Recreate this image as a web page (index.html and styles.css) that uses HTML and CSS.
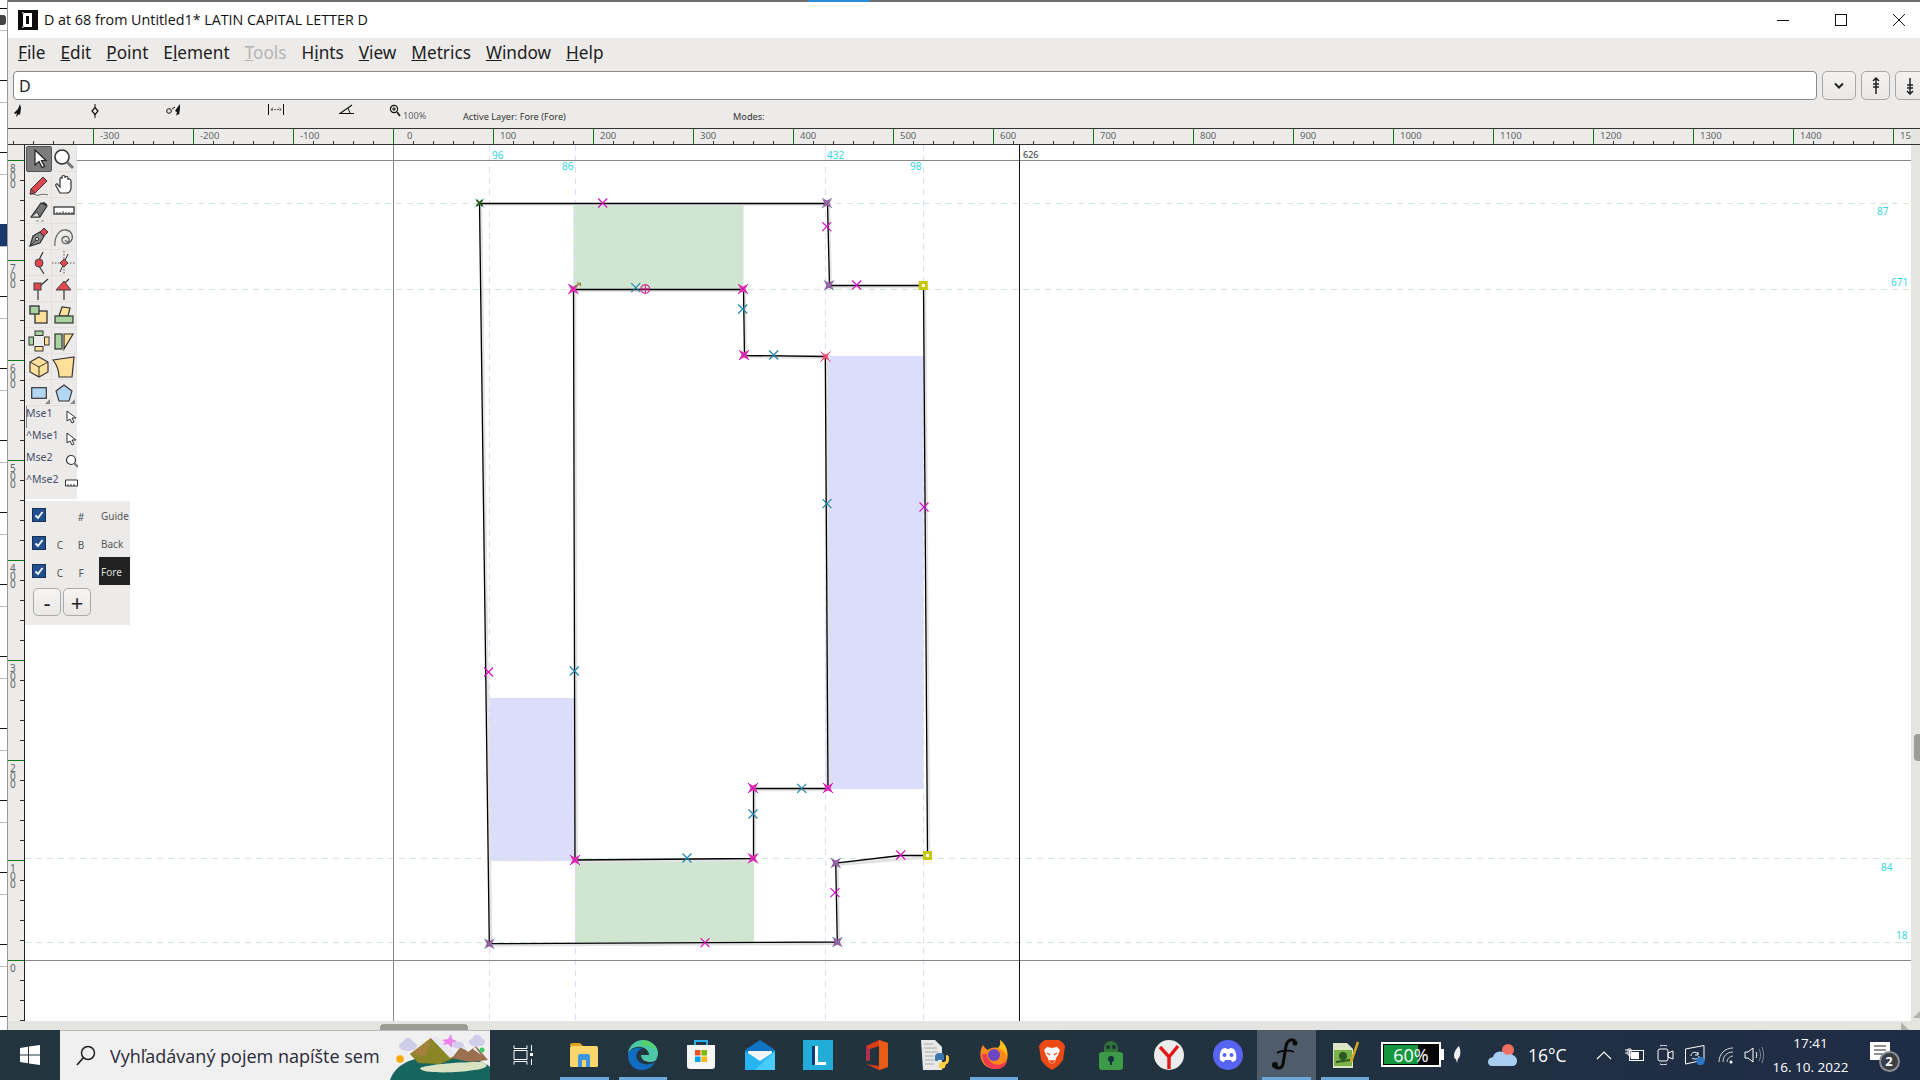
FILE: index.html
```html
<!DOCTYPE html>
<html lang="en">
<head>
  <meta charset="UTF-8" />
  <title>D at 68 from Untitled1* LATIN CAPITAL LETTER D</title>
  <link rel="stylesheet" href="styles.css">
</head>

<body>
  <div class="desktop">
    <div class="desk-edge">
      <div class="desk-icon"></div>
      <div class="desk-navy"></div>
    </div>

    <div class="window">
      <div class="top-accent"></div>
      <!-- title bar -->
      <div class="titlebar">
        <svg class="app-icon" width="20" height="20" viewBox="0 0 20 20">
          <rect width="20" height="20" fill="#0c0c0c"/>
          <path d="M5 3h9v14H5z" fill="#fff"/>
          <path d="M8 6h3v8H8z" fill="#0c0c0c"/>
          <path d="M4 2h2v2H4zM4 16h2v2H4z" fill="#888"/>
        </svg>
        <span class="title-text">D at 68 from Untitled1* LATIN CAPITAL LETTER D</span>
        <div class="win-controls">
          <svg width="14" height="14" viewBox="0 0 14 14"><path d="M1 7.500h12" stroke="#111" fill="none"/></svg>
          <svg width="14" height="14" viewBox="0 0 14 14"><rect x="1.500" y="1.500" width="11" height="11" stroke="#111" fill="none"/></svg>
          <svg width="14" height="14" viewBox="0 0 14 14"><path d="M1 1l12 12M13 1L1 13" stroke="#111" fill="none"/></svg>
        </div>
      </div>

      <!-- menu -->
      <div class="menubar">
        <span><u>F</u>ile</span>
        <span><u>E</u>dit</span>
        <span><u>P</u>oint</span>
        <span>E<u>l</u>ement</span>
        <span class="disabled"><u>T</u>ools</span>
        <span>H<u>i</u>nts</span>
        <span><u>V</u>iew</span>
        <span><u>M</u>etrics</span>
        <span><u>W</u>indow</span>
        <span><u>H</u>elp</span>
      </div>

      <!-- glyph entry -->
      <div class="entry-row">
        <div class="entry">D</div>
        <button class="entry-btn wide">
          <svg width="12" height="8" viewBox="0 0 12 8"><path d="M2 1.500l4 4 4-4" stroke="#222" stroke-width="2" fill="none"/></svg>
        </button>
        <button class="entry-btn">
          <svg width="10" height="18" viewBox="0 0 10 18"><path d="M5 1v16M2 7h6M2 10h6M2 4l3-3 3 3" stroke="#222" stroke-width="1.500" fill="none"/></svg>
        </button>
        <button class="entry-btn">
          <svg width="10" height="18" viewBox="0 0 10 18"><path d="M5 1v16M2 8h6M2 11h6M2 14l3 3 3-3" stroke="#222" stroke-width="1.500" fill="none"/></svg>
        </button>
      </div>

      <!-- info row -->
      <div class="inforow">
        <div class="info-cell w78">
          <svg width="10" height="13" viewBox="0 0 10 13"><path d="M7 0L5 5 1 9l1 1 2-1-1 4 3-3 1 1 1-7z" fill="#111"/></svg>
        </div>
        <div class="info-cell w75">
          <svg width="8" height="14" viewBox="0 0 8 14"><path d="M4 0v3M4 10v4" stroke="#111"/><path d="M4 3.500L7 7l-3 3.500L1 7z" fill="none" stroke="#111" stroke-width="1.200"/></svg>
        </div>
        <div class="info-cell w102">
          <svg width="16" height="13" viewBox="0 0 16 13"><circle cx="3" cy="7" r="2.300" fill="none" stroke="#111"/><path d="M6 5l3-2" stroke="#111"/><path d="M14 0l-3 4-2 3 2 1-1 4 2-2 1 1 1-7z" fill="#111"/></svg>
        </div>
        <div class="info-cell w71">
          <svg width="16" height="11" viewBox="0 0 16 11"><path d="M.5 0v11M15.500 0v11" stroke="#111"/><path d="M3 5.500h10M5 3.500l-2 2 2 2M11 3.500l2 2-2 2" stroke="#333" stroke-width=".8" fill="none" stroke-dasharray="2 1"/></svg>
        </div>
        <div class="info-cell w50">
          <svg width="16" height="10" viewBox="0 0 16 10"><path d="M0 9.500h15M1 9.500L13 1" stroke="#111" fill="none" stroke-width="1.100"/><path d="M9 4l2 5" stroke="#111" fill="none"/></svg>
        </div>
        <div class="info-cell w74">
          <svg width="12" height="13" viewBox="0 0 12 13"><circle cx="5" cy="5" r="3.600" fill="none" stroke="#111" stroke-width="1.200"/><path d="M3 5h4M5 3v4" stroke="#111"/><path d="M8 8l3 4" stroke="#111" stroke-width="1.500"/></svg>
          <span class="zoom-text">100%</span>
        </div>
        <div class="info-cell w270 info-text">Active Layer: Fore (Fore)</div>
        <div class="info-cell info-text">Modes:</div>
      </div>

      <!-- top ruler -->
      <div class="hruler">
        <div class="hr-start"></div>
        <div class="hr-cell">-300</div>
        <div class="hr-cell">-200</div>
        <div class="hr-cell">-100</div>
        <div class="hr-cell zero">0</div>
        <div class="hr-cell">100</div>
        <div class="hr-cell">200</div>
        <div class="hr-cell">300</div>
        <div class="hr-cell">400</div>
        <div class="hr-cell">500</div>
        <div class="hr-cell">600</div>
        <div class="hr-cell">700</div>
        <div class="hr-cell">800</div>
        <div class="hr-cell">900</div>
        <div class="hr-cell">1000</div>
        <div class="hr-cell">1100</div>
        <div class="hr-cell">1200</div>
        <div class="hr-cell">1300</div>
        <div class="hr-cell">1400</div>
        <div class="hr-cell last">1500</div>
        <div class="hr-corner"></div>
      </div>

      <div class="work">
        <!-- left ruler -->
        <div class="vruler">
          <div class="vr-start"></div>
          <div class="vr-cell"><span>800</span></div>
          <div class="vr-cell"><span>700</span></div>
          <div class="vr-cell"><span>600</span></div>
          <div class="vr-cell"><span>500</span></div>
          <div class="vr-cell"><span>400</span></div>
          <div class="vr-cell"><span>300</span></div>
          <div class="vr-cell"><span>200</span></div>
          <div class="vr-cell"><span>100</span></div>
          <div class="vr-cell"><span>0</span></div>
        </div>

        <div class="canvas-wrap">
          <!-- glyph canvas, coordinates are screen pixels -->
          <svg class="canvas" width="1886" height="876" viewBox="25 145 1886 876">
            <defs>
              <g id="offM"><path d="M-4.500-4.500l9 9M4.500-4.500l-9 9" stroke="#d810c0" stroke-width="1.200" fill="none"/></g>
              <g id="offT"><path d="M-4.500-4.500l9 9M4.500-4.500l-9 9" stroke="#1c86a8" stroke-width="1.200" fill="none"/></g>
              <g id="ptM">
                <path d="M-5-5L0-2.500 5-5 2.500 0 5 5 0 2.500-5 5-2.500 0z" fill="#dc3cb0"/>
                <path d="M-5-5l10 10M5-5L-5 5" stroke="#d810c0" fill="none"/>
              </g>
              <g id="ptP">
                <path d="M-5-5L0-2.500 5-5 2.500 0 5 5 0 2.500-5 5-2.500 0z" fill="#a84c98"/>
                <path d="M-5-5l10 10M5-5L-5 5" stroke="#4a9cb8" fill="none" stroke-width=".8"/>
              </g>
              <g id="ptY"><rect x="-3" y="-3" width="6" height="6" fill="#fff" stroke="#c8c800" stroke-width="3"/></g>
            </defs>

            <!-- hint zones -->
            <rect x="573.500" y="203" width="170" height="86" fill="#d0e6d0"/>
            <rect x="575" y="858.500" width="179" height="84" fill="#d0e6d0"/>
            <rect x="825.500" y="356" width="98" height="433" fill="#dcdcfb"/>
            <rect x="489.500" y="698" width="85.500" height="163" fill="#dcdcfb"/>

            <!-- guides -->
            <g stroke="#cfe8cf" stroke-dasharray="6 5" fill="none">
              <path d="M77 203.500H1911M77 289.500H1911M25 858.500H1911M25 942.500H1911"/>
            </g>
            <g stroke="#dcdcf8" stroke-dasharray="6 5" fill="none">
              <path d="M489.500 145V1021M575.500 145V1021M825.500 145V1021M923.500 145V1021"/>
            </g>
            <path d="M77 160.500H1911M25 960.500H1911M393.500 145V1021" stroke="#888" fill="none"/>
            <path d="M1019.500 145V1021" stroke="#111" fill="none"/>

            <!-- back layer shadow -->
            <g transform="translate(1.500 1.500)" fill="none" stroke="#e2e2e2" stroke-width="3">
              <path d="M479.300 202.700H827L829 285.300H923.300L927.300 855.300L835.700 863L837.300 942L489.300 943.700Z"/>
              <path d="M573.300 289H743L744 355L825.300 356L828 788.300H753V858.300L575 860Z"/>
            </g>

            <!-- outline -->
            <g fill="none" stroke="#000" stroke-width="1.300">
              <path d="M479.500 203.500H827.500L829.500 285.500H923.500L927.500 855.500L900.700 855.500L835.700 863L837.300 942L489.300 943.700Z"/>
              <path d="M573.500 289.500H743.500L744.500 355.500L825.300 356.500L828 788.500H753.500V858.500L575 860Z"/>
            </g>

            <!-- control points -->
            <use href="#offM" x="602.700" y="203"/>
            <use href="#offM" x="826.700" y="226.700"/>
            <use href="#offM" x="856.700" y="285"/>
            <use href="#offM" x="924" y="507"/>
            <use href="#offM" x="900.700" y="855"/>
            <use href="#offM" x="835" y="892.700"/>
            <use href="#offM" x="705" y="942.700"/>
            <use href="#offM" x="488.600" y="672"/>
            <use href="#offT" x="635.700" y="287.700"/>
            <use href="#offT" x="742.700" y="309"/>
            <use href="#offT" x="773.700" y="355"/>
            <use href="#offT" x="827" y="503.700"/>
            <use href="#offT" x="801.700" y="788.300"/>
            <use href="#offT" x="753" y="814"/>
            <use href="#offT" x="687" y="858"/>
            <use href="#offT" x="574.300" y="671"/>
            <use href="#ptM" x="573.300" y="289"/>
            <use href="#ptM" x="743" y="289"/>
            <use href="#ptM" x="744" y="355"/>
            <use href="#ptM" x="753" y="788"/>
            <use href="#ptM" x="828" y="788"/>
            <use href="#ptM" x="753" y="858.300"/>
            <use href="#ptM" x="575" y="860"/>
            <use href="#ptP" x="827" y="203"/>
            <use href="#ptP" x="829" y="285.300"/>
            <use href="#ptP" x="835.700" y="863"/>
            <use href="#ptP" x="837.300" y="942"/>
            <use href="#ptP" x="489.300" y="943.700"/>
            <use href="#ptY" x="923.300" y="285.500"/>
            <use href="#ptY" x="927.500" y="855.500"/>
            <path d="M475 198.500l9 9M484 198.500l-9 9" stroke="#4a9cb8" fill="none"/>
            <path d="M476.500 200l6 6M482.500 200l-6 6" stroke="#2a5a20" stroke-width="1.800" fill="none"/>
            <path d="M820.500 351.500l10 10M830.500 351.500l-10 10" stroke="#e8208a" fill="none"/>
            <path d="M821.500 352.500L825.500 354.500 829.500 352.500 827.500 356.500 829.500 360.500 825.500 358.500 821.500 360.500 823.500 356.500z" fill="#f04a78"/>
            <path d="M574 287l6-3M577 283h3.500v3" stroke="#7a8a10" fill="none"/>
            <circle cx="645.300" cy="289" r="4.300" fill="none" stroke="#d01080" stroke-width="1.100"/>
            <path d="M641 289h8.600M645.300 284.700v8.600" stroke="#d01080"/>

            <!-- labels -->
            <g class="cyan-label">
              <text x="492" y="159">96</text>
              <text x="562" y="170">86</text>
              <text x="827" y="159">432</text>
              <text x="910" y="170">98</text>
              <text x="1877" y="215">87</text>
              <text x="1891" y="286">671</text>
              <text x="1881" y="871">84</text>
              <text x="1896" y="939">18</text>
            </g>
            <text class="width-label" x="1023" y="158">626</text>
          </svg>

          <!-- tool palette -->
          <div class="toolbox">
            <div class="tool selected"><svg width="22" height="22" viewBox="0 0 22 22"><path d="M7 2v15l4-3.500 3 6 2.500-1-3-6H18z" fill="#fff" stroke="#222" stroke-width="1.200"/></svg></div>
            <div class="tool"><svg width="22" height="22" viewBox="0 0 22 22"><circle cx="9" cy="9" r="7" fill="#fff" stroke="#333" stroke-width="1.600"/><path d="M14 14l6 6" stroke="#777" stroke-width="3"/></svg></div>

            <div class="tool"><svg width="22" height="22" viewBox="0 0 22 22"><path d="M3 15L15 3l4 4L7 19l-5 1z" fill="#e0474c" stroke="#333"/><path d="M3 15l4 4" stroke="#333"/><path d="M2 21c4-2 6 1 9 0s5-1 9 0" stroke="#666" fill="none"/></svg></div>
            <div class="tool"><svg width="22" height="22" viewBox="0 0 22 22"><path d="M7 19l-4-7c-1-2 1-3 2-1l2 2V5c0-2 2-2 2 0V3c0-2 3-2 3 0v1c0-2 3-2 3 0v2c0-2 3-1 3 1v7c0 3-2 5-4 5z" fill="#fff" stroke="#333" stroke-width="1.200"/></svg></div>

            <div class="tool"><svg width="22" height="22" viewBox="0 0 22 22"><path d="M3 17L13 3l6 3-7 11z" fill="#777" stroke="#333" stroke-width="1.200"/><path d="M3 17l9 0-3-5z" fill="#ddd" stroke="#333"/><path d="M13 3l3-1 3 2 0 2z" fill="#333"/><path d="M8 21h10" stroke="#888" stroke-dasharray="3 2"/></svg></div>
            <div class="tool"><svg width="22" height="10" viewBox="0 0 22 10"><rect x="1" y="1" width="20" height="7" fill="#fff" stroke="#333" stroke-width="1.300"/><path d="M4 6V8M7 6V8M10 5V8M13 6V8M16 6V8M19 6V8" stroke="#333"/></svg></div>

            <div class="tool"><svg width="22" height="22" viewBox="0 0 22 22"><path d="M2 20l3-10 7-4 4 4-4 7z" fill="#888" stroke="#333" stroke-width="1.200"/><path d="M2 20l6-6" stroke="#333"/><circle cx="9" cy="13" r="1.600" fill="#eee" stroke="#333"/><path d="M12 6l4-4 4 4-4 4z" fill="#e0474c" stroke="#333"/></svg></div>
            <div class="tool"><svg width="22" height="22" viewBox="0 0 22 22"><path d="M2 20C1 10 7 3 13 4s8 7 5 11-9 3-9-1 6-5 7-1-3 3-4 1" fill="none" stroke="#666" stroke-width="1.300"/></svg></div>

            <div class="tool"><svg width="22" height="24" viewBox="0 0 22 24"><path d="M15 1L11 9M11 15l5 8" stroke="#333" stroke-width="1.200"/><circle cx="11" cy="12" r="4" fill="#e0474c" stroke="#444"/></svg></div>
            <div class="tool"><svg width="24" height="24" viewBox="0 0 24 24"><path d="M0 12h24M12 0v24" stroke="#555" stroke-dasharray="1.500 1.500"/><path d="M16 3L12 12l-4 9" stroke="#333"/><path d="M12 8l4 4-4 4-4-4z" fill="#e0474c" stroke="#444"/></svg></div>

            <div class="tool"><svg width="22" height="22" viewBox="0 0 22 22"><path d="M10 11v11M12 8l8-7" stroke="#333" stroke-width="1.200"/><rect x="6" y="5" width="7" height="7" fill="#e0474c" stroke="#444"/></svg></div>
            <div class="tool"><svg width="22" height="22" viewBox="0 0 22 22"><path d="M11 12v10M11 6l5-5" stroke="#333" stroke-width="1.200"/><path d="M11 3l7 9H3z" fill="#e0474c" stroke="#444"/></svg></div>

            <div class="tool"><svg width="22" height="22" viewBox="0 0 22 22"><rect x="7" y="7" width="12" height="12" fill="#ffe09a" stroke="#333" stroke-width="1.300"/><rect x="2" y="2" width="9" height="8" fill="#a8d4a0" stroke="#333" stroke-width="1.300"/></svg></div>
            <div class="tool"><svg width="22" height="22" viewBox="0 0 22 22"><path d="M6 12l3-9 8 1-2 8z" fill="#ffe09a" stroke="#333" stroke-width="1.200"/><rect x="2" y="12" width="18" height="7" fill="#a8d4a0" stroke="#333" stroke-width="1.200"/></svg></div>

            <div class="tool"><svg width="22" height="22" viewBox="0 0 22 22"><rect x="7" y="1" width="8" height="4.500" fill="#a8d4a0" stroke="#333"/><rect x="1" y="7" width="4.500" height="8" fill="#a8d4a0" stroke="#333"/><rect x="16.500" y="7" width="4.500" height="8" fill="#ffe09a" stroke="#333"/><rect x="7" y="16.500" width="8" height="4.500" fill="#ffe09a" stroke="#333"/></svg></div>
            <div class="tool"><svg width="22" height="22" viewBox="0 0 22 22"><rect x="2" y="4" width="7" height="15" fill="#a8d4a0" stroke="#333" stroke-width="1.200"/><path d="M11 4h9l-9 15z" fill="#ffe09a" stroke="#333" stroke-width="1.200"/></svg></div>

            <div class="tool"><svg width="22" height="22" viewBox="0 0 22 22"><path d="M11 1l9 5v10l-9 5-9-5V6z" fill="#ffe09a" stroke="#333" stroke-width="1.200"/><path d="M2 6l9 5 9-5M11 11v10" fill="none" stroke="#333"/></svg></div>
            <div class="tool"><svg width="24" height="22" viewBox="0 0 24 22"><path d="M1 4l21-3-2 20-13 0c0-6-2-12-6-17z" fill="#ffe09a" stroke="#333" stroke-width="1.200"/></svg></div>

            <div class="tool shape"><svg width="16" height="12" viewBox="0 0 16 12"><rect x=".7" y=".7" width="14.600" height="10.600" fill="#b4d6f4" stroke="#333" stroke-width="1.200"/></svg></div>
            <div class="tool shape"><svg width="18" height="18" viewBox="0 0 18 18"><path d="M9 1l8 6-3 10H4L1 7z" fill="#b4d6f4" stroke="#333" stroke-width="1.100"/></svg></div>

            <div class="mouse-row first">
              <span>Mse1</span>
              <svg width="12" height="14" viewBox="0 0 12 14"><path d="M1 1v10l3-2 2 4 2-1-2-4h4z" fill="#fff" stroke="#333"/></svg>
            </div>
            <div class="mouse-row">
              <span>^Mse1</span>
              <svg width="12" height="14" viewBox="0 0 12 14"><path d="M1 1v10l3-2 2 4 2-1-2-4h4z" fill="#fff" stroke="#333"/></svg>
            </div>
            <div class="mouse-row">
              <span>Mse2</span>
              <svg width="13" height="14" viewBox="0 0 13 14"><circle cx="6" cy="6" r="4.500" fill="#fff" stroke="#333" stroke-width="1.200"/><path d="M9 9l4 4" stroke="#777" stroke-width="2"/></svg>
            </div>
            <div class="mouse-row">
              <span>^Mse2</span>
              <svg width="13" height="10" viewBox="0 0 13 10"><path d="M.5 2h12v6H.5z" fill="#fff" stroke="#333"/><path d="M3 6v2M6 6v2M9 6v2" stroke="#333"/></svg>
            </div>
          </div>

          <!-- layers -->
          <div class="layers">
            <div class="layer-row">
              <span class="check"><svg width="10" height="10" viewBox="0 0 10 10"><path d="M1.500 5.500l2.500 2.500 4.500-6" stroke="#fff" stroke-width="1.800" fill="none"/></svg></span>
              <span class="layer-c"></span><span class="layer-k">#</span><span class="layer-name">Guide</span>
            </div>
            <div class="layer-row">
              <span class="check"><svg width="10" height="10" viewBox="0 0 10 10"><path d="M1.500 5.500l2.500 2.500 4.500-6" stroke="#fff" stroke-width="1.800" fill="none"/></svg></span>
              <span class="layer-c">C</span><span class="layer-k">B</span><span class="layer-name">Back</span>
            </div>
            <div class="layer-row">
              <span class="check"><svg width="10" height="10" viewBox="0 0 10 10"><path d="M1.500 5.500l2.500 2.500 4.500-6" stroke="#fff" stroke-width="1.800" fill="none"/></svg></span>
              <span class="layer-c">C</span><span class="layer-k">F</span><span class="layer-name active">Fore</span>
            </div>
            <div class="layer-btns">
              <button class="layer-btn">-</button>
              <button class="layer-btn">+</button>
            </div>
          </div>
        </div>

        <!-- right scrollbar -->
        <div class="vscroll"><div class="vthumb"></div></div>
      </div>

      <div class="hscroll"><div class="hthumb"></div></div>
    </div>
  </div>

  <!-- windows taskbar -->
  <div class="taskbar">
    <div class="start">
      <svg width="20" height="20" viewBox="0 0 20 20"><path d="M0 3l8-1.200V9.500H0zM9 1.600L20 0v9.500H9zM0 10.500h8v7.700L0 17zM9 10.500h11V20L9 18.400z" fill="#fff"/></svg>
    </div>
    <div class="search">
      <svg width="20" height="22" viewBox="0 0 20 22"><circle cx="12" cy="8" r="6.500" fill="none" stroke="#222" stroke-width="1.500"/><path d="M7.500 12.500L1 20" stroke="#222" stroke-width="1.700"/></svg>
      <span class="search-text">Vyhľadávaný pojem napíšte sem</span>
      <svg class="search-art" width="100" height="50" viewBox="0 0 100 50">
        <path d="M0 50C5 36 18 28 40 27s50 0 60 10v13z" fill="#17655f"/>
        <path d="M30 38c10-4 40-6 62-6 8 2 6 7-8 8-16 3-54 4-54-2z" fill="#d9e3c4"/>
        <path d="M20 24L41 8l23 20-14 6-22-1z" fill="#8a8628"/>
        <path d="M41 8l6-2 19 19-6 3z" fill="#e8e8f0"/>
        <path d="M20 24L41 8 36 26z" fill="#a4803c"/>
        <path d="M62 28l10-13 6 7 8-6 12 14-16 2-12-2z" fill="#9a7050"/>
        <path d="M70 17l2-2 5 6zM85 17l6 8-8-6z" fill="#eeeef4"/>
        <g fill="#cfcdea">
          <ellipse cx="18" cy="16" rx="9" ry="5"/><circle cx="18" cy="13" r="5"/>
          <ellipse cx="87" cy="12" rx="8" ry="4.500"/><circle cx="87" cy="9" r="4.500"/>
          <ellipse cx="68" cy="15" rx="6" ry="3.500"/>
        </g>
        <path d="M52 10l6-1 3-5 1 5 5 2-5 2 0 5-4-4-5 1 2-3z" fill="#ea80ec"/>
        <circle cx="10" cy="29" r="3.800" fill="#f8a808"/>
        <circle cx="92" cy="20" r="2.500" fill="#3cc868"/>
      </svg>
    </div>

    <div class="task-view">
      <svg width="20" height="20" viewBox="0 0 20 20"><path d="M1 .5v3h13v-3M1 19.500v-3h13v3M1 5.500h13v9H1z" fill="none" stroke="#fff"/><path d="M18.500 0v6M18.500 14v6" stroke="#fff"/><rect x="17" y="8" width="3" height="3" fill="#fff"/></svg>
    </div>

    <div class="tasks">
      <div class="task running">
        <svg width="28" height="24" viewBox="0 0 28 24"><path d="M0 2c0-1 1-2 2-2h8l3 3h-13z" fill="#e0a020"/><rect y="3" width="28" height="21" rx="1.500" fill="#fcd66a"/><path d="M8 24v-11c0-1 1-2 2-2h8c1 0 2 1 2 2v11h-4v-7h-4v7z" fill="#3c96de"/></svg>
      </div>
      <div class="task running">
        <svg width="30" height="30" viewBox="0 0 30 30"><path d="M15 0C7 0 1 6 0 13c3-5 8-7 13-6 5 1 8 4 8 8h-8c0 5 5 7 9 7 3 0 5-1 6-2 1-2 2-4 2-7C30 6 23 0 15 0z" fill="#4cc8a8"/><path d="M0 13c-1 9 5 17 13 17 6 0 11-2 14-8-3 2-8 3-11 2-6-1-9-6-7-11 1-2 3-4 6-5-7-1-13 1-15 5z" fill="#0f6cc0"/><path d="M15 0c6 0 13 5 15 13-2-4-6-7-10-7-3-1-6 0-7 1 0 0 1-7 2-7z" fill="#58d84c" opacity=".7"/></svg>
      </div>
      <div class="task">
        <svg width="30" height="30" viewBox="0 0 30 30"><path d="M9 5V1h12v4" fill="none" stroke="#28b0e8" stroke-width="2"/><path d="M1 5h28v21c0 2-1 3-3 3H4c-2 0-3-1-3-3z" fill="#f6f6f6"/><rect x="9" y="10" width="5.500" height="5.500" fill="#f25022"/><rect x="15.500" y="10" width="5.500" height="5.500" fill="#7fba00"/><rect x="9" y="16.500" width="5.500" height="5.500" fill="#00a4ef"/><rect x="15.500" y="16.500" width="5.500" height="5.500" fill="#ffb900"/></svg>
      </div>
      <div class="task">
        <svg width="30" height="30" viewBox="0 0 30 30"><path d="M0 10L15 0l15 10v20H0z" fill="#0f74c4"/><path d="M3 11h24v5l-12 7-12-7z" fill="#f0f6fc"/><path d="M0 11v19h30V11L15 21z" fill="#28b4f0"/><path d="M30 11v19H10z" fill="#48ccf8"/></svg>
      </div>
      <div class="task">
        <svg width="30" height="30" viewBox="0 0 30 30"><rect width="30" height="30" fill="#22acd8"/><path d="M9 6h6v16h8v3H9z" fill="#fff"/><path d="M9 6h3v19H9z" fill="#0a3c78"/></svg>
      </div>
      <div class="task">
        <svg width="22" height="30" viewBox="0 0 22 30"><path d="M0 6l13-6 9 3v24l-9 3-13-6 13 2V6l-9 3v11l-4 1z" fill="#d83c14"/><path d="M0 6l4 3v11l-4 1z" fill="#b03050"/><path d="M13 0l9 3v24l-9 3z" fill="#e85c18"/></svg>
      </div>
      <div class="task">
        <svg width="28" height="30" viewBox="0 0 28 30"><path d="M0 0h14l7 7v23H2z" fill="#e8e8e8"/><path d="M3 4h9M3 8h13M4 12h13M4 16h9M4 20h9M4 24h9" stroke="#aaa"/><path d="M14 17c0-3 2-4 5-4s4 1 4 3v4h-6v1h-3z" fill="#3a78b0"/><path d="M28 18c0-2-1-3-3-3v5c0 2-2 2-4 2s-3 1-3 3v2c0 2 6 2 6 0l1-3c2 0 3-2 3-6z" fill="#fcd040"/></svg>
      </div>
      <div class="task running">
        <svg width="28" height="30" viewBox="0 0 28 30"><path d="M3 5c-3 5-4 12 0 18 4 6 14 8 20 3 5-4 6-12 3-18-1-3-3-5-6-8 1 4 0 6-2 8-4-1-8 0-10 2-2-1-4-3-5-5z" fill="#ff8a1c"/><path d="M20 0c1 4 0 6-2 8 4 1 8 4 9 9 1-6-1-13-7-17z" fill="#ffc21c"/><path d="M2 14c0 9 6 15 14 15s11-5 11-9c-4 5-10 6-15 3-3-2-5-5-5-9z" fill="#f03a50"/><circle cx="14" cy="15" r="6" fill="#6a46c4"/></svg>
      </div>
      <div class="task">
        <svg width="26" height="30" viewBox="0 0 26 30"><path d="M6 0h14l4 3 2 3-2 14-5 6-6 4-6-4-5-6L0 6l2-3z" fill="#f04a14"/><path d="M13 8l5-1 3 3-2 5-2 3-1 4-3 2-3-2-1-4-2-3-2-5 3-3z" fill="#fff"/><path d="M8 13l3 2M18 13l-3 2M11 21h4l-2 2z" stroke="#f04a14" fill="#f04a14" stroke-width="1.400"/></svg>
      </div>
      <div class="task">
        <svg width="24" height="30" viewBox="0 0 24 30"><path d="M5 12V8c0-9 14-9 14 0v4" fill="#30743a"/><rect y="12" width="24" height="18" rx="3" fill="#3c9a48"/><circle cx="9" cy="7" r="2" fill="#1f3038"/><circle cx="15" cy="7" r="2" fill="#1f3038"/><circle cx="12" cy="19" r="3" fill="#15303a"/><path d="M11 20h2v5h-2z" fill="#15303a"/></svg>
      </div>
      <div class="task">
        <svg width="30" height="30" viewBox="0 0 30 30"><circle cx="15" cy="15" r="15" fill="#ececec"/><path d="M6 7l9 10 9-11M15 17v12" fill="none" stroke="#e01818" stroke-width="3.400"/></svg>
      </div>
      <div class="task">
        <svg width="30" height="30" viewBox="0 0 30 30"><circle cx="15" cy="15" r="15" fill="#5865f2"/><path d="M7 20c-1-4 0-8 2-11 2-1 3-1 4-1l1 1h2l1-1c1 0 2 0 4 1 2 3 3 7 2 11-1 1-3 2-4 2l-1-2h-6l-1 2c-1 0-3-1-4-2z" fill="#fff"/><circle cx="11.500" cy="15" r="2" fill="#5865f2"/><circle cx="18.500" cy="15" r="2" fill="#5865f2"/></svg>
      </div>
      <div class="task running selected">
        <svg width="32" height="34" viewBox="0 0 32 34"><path d="M25 3c-4-3-8 0-9 5l-3 18c-1 5-6 5-9 2" fill="none" stroke="#0a0a0a" stroke-width="3"/><path d="M7 15c4-3 13-3 17-1" fill="none" stroke="#0a0a0a" stroke-width="1.600"/><circle cx="5" cy="27" r="3" fill="#0a0a0a"/><circle cx="25" cy="5" r="2.500" fill="#0a0a0a"/></svg>
      </div>
      <div class="task running">
        <svg width="30" height="30" viewBox="0 0 30 30"><path d="M3 3h14l6 6v19H3z" fill="#dde6c4"/><rect x="4" y="10" width="18" height="16" fill="#7cb048"/><circle cx="13" cy="16" r="4" fill="#2a5a20"/><path d="M6 22l14-2" stroke="#2a5a20" stroke-width="2"/><path d="M21 22L28 2" stroke="#d8a820" stroke-width="2.500"/></svg>
      </div>
    </div>

    <div class="tray">
      <div class="battery-meter">
        <div class="battery-fill"></div>
        <span class="battery-text">60%</span>
      </div>
      <svg class="tray-leaf" width="9" height="18" viewBox="0 0 9 18"><path d="M6 0C1 5 0 9 2 13h1l1 4 1-4c3-3 3-8 1-13z" fill="#eee"/></svg>
      <svg class="tray-cloud" width="30" height="24" viewBox="0 0 30 24"><circle cx="21" cy="7" r="6" fill="#f07060"/><path d="M5 23c-5 0-6-8 1-9 1-6 10-8 13-2 5-2 11 1 11 6 0 3-2 5-5 5z" fill="#a8cdf0"/></svg>
      <span class="temp">16°C</span>
      <svg class="tray-chevron" width="16" height="9" viewBox="0 0 16 9"><path d="M1 8l7-7 7 7" fill="none" stroke="#fff" stroke-width="1.100"/></svg>
      <svg class="tray-plug" width="20" height="14" viewBox="0 0 20 14"><path d="M0 2h3M0 5h3M3 1h3v6H3zM5 7v3" stroke="#fff" fill="none"/><rect x="4.500" y="2.500" width="14" height="10" fill="none" stroke="#fff"/><rect x="6" y="4" width="8" height="7" fill="#fff"/></svg>
      <svg class="tray-meet" width="17" height="20" viewBox="0 0 17 20"><rect x="1" y="4" width="10" height="12" rx="2" fill="none" stroke="#fff"/><path d="M11 8l5-2v8l-5-2zM3 1c2-1 5-1 7 0M3 19c2 1 5 1 7 0" fill="none" stroke="#fff"/></svg>
      <svg class="tray-screen" width="20" height="20" viewBox="0 0 20 20"><path d="M.5 4L19 .5V15L.5 19z" fill="none" stroke="#fff"/><path d="M6 11c0-4 5-5 7-2M13 7v3h-3M14 11c0 3-5 4-7 2" stroke="#fff" fill="none"/><circle cx="15.500" cy="16" r="4.200" fill="#2a78c8"/></svg>
      <svg class="tray-wifi" width="17" height="17" viewBox="0 0 17 17"><path d="M1 15C1 7 7 1 15 1M5 15c0-6 4-10 10-10M9 15c0-3 3-6 6-6" fill="none" stroke="#cfd4da"/><circle cx="13" cy="15" r="1.500" fill="#fff"/></svg>
      <svg class="tray-sound" width="20" height="18" viewBox="0 0 20 18"><path d="M1 6h3l5-4v14l-5-4H1z" fill="none" stroke="#fff"/><path d="M12 6c1 2 1 4 0 6" fill="none" stroke="#fff"/><path d="M15 3c2 4 2 8 0 12M18 1c2 5 2 11 0 16" fill="none" stroke="#7f8a98"/></svg>
      <div class="clock">
        <div>17:41</div>
        <div>16. 10. 2022</div>
      </div>
      <div class="notify">
        <svg width="20" height="18" viewBox="0 0 20 18"><rect width="20" height="18" fill="#fff"/><path d="M4 4h12M4 8h12M4 12h12" stroke="#222"/></svg>
        <span class="notify-badge">2</span>
      </div>
    </div>
  </div>
</body>
</html>
```

FILE: styles.css
```css
:root {
  --panel: #ecebe9;
  --ink: #1c1c1c;
  --ruler-text: #5f6468;
  --green-tick: #0c7a14;
}

* {
  box-sizing: border-box;
}

body {
  margin: 0;
  width: 1920px;
  height: 1080px;
  overflow: hidden;
  display: flex;
  flex-direction: column;
  font-family: "Noto Sans", Arial, sans-serif;
  background: #fff;
}

.desktop {
  height: 1030px;
  display: flex;
}

.desk-edge {
  position: relative;
  width: 8px;
  background-color: #fff;
  background-image:
    linear-gradient(#111 1px, transparent 1px),
    linear-gradient(#bbb 1px, transparent 1px);
  background-size: 7px 72px, 7px 72px;
  background-position: 0 8px, 0 30px;
  background-repeat: repeat-y;
  border-right: 1px solid #999;
}

.desk-icon {
  position: absolute;
  top: 15px;
  left: 0;
  width: 6px;
  height: 10px;
  background: #444;
  border-radius: 0 3px 3px 0;
}

.desk-navy {
  position: absolute;
  top: 224px;
  left: 0;
  width: 7px;
  height: 22px;
  background: #17396b;
}

.window {
  position: relative;
  flex: 1;
  min-width: 0;
  display: flex;
  flex-direction: column;
  background: var(--panel);
  border-top: 2px solid #6e6e6e;
}

.top-accent {
  position: absolute;
  left: 800px;
  top: -2px;
  width: 62px;
  height: 2px;
  background: #2a8cd8;
}

/* title bar */
.titlebar {
  height: 36px;
  background: #fff;
  display: flex;
  align-items: center;
  padding: 0 0 1px 10px;
}

.title-text {
  margin-left: 6px;
  font-family: "Open Sans", Arial, sans-serif;
  font-size: 14.3px;
  color: #111;
}

.win-controls {
  margin-left: auto;
  width: 144px;
  padding-right: 14px;
  display: flex;
  justify-content: space-between;
}

/* menu */
.menubar {
  height: 33px;
  display: flex;
  align-items: center;
  gap: 15px;
  padding: 0 0 4px 10px;
  font-size: 17.2px;
  color: var(--ink);
}

.menubar .disabled {
  color: #b5b3b1;
}

.entry-row {
  height: 29px;
  display: flex;
  padding-left: 5px;
  gap: 5px;
}

.entry {
  flex: none;
  width: 1804px;
  background: #fff;
  border: 1px solid #8a8a8a;
  border-radius: 4px;
  padding-left: 5px;
  font-size: 16px;
  line-height: 28px;
  color: #222;
}

.entry-btn {
  flex: none;
  width: 29px;
  height: 29px;
  padding: 0;
  display: flex;
  align-items: center;
  justify-content: center;
  background: linear-gradient(#f4f3f2, #e8e7e5);
  border: 1px solid #a8a8a8;
  border-radius: 5px;
}

.entry-btn.wide {
  width: 34px;
}

/* info row under the entry */
.inforow {
  height: 28px;
  display: flex;
  padding-left: 5px;
  padding-top: 4px;
  font-size: 9.2px;
  color: #444;
}

.info-cell {
  flex: none;
  display: flex;
  align-items: flex-start;
}

.w78 { width: 78px; }
.w75 { width: 75px; }
.w102 { width: 102px; }
.w71 { width: 71px; }
.w50 { width: 50px; }
.w74 { width: 74px; }
.w270 { width: 270px; }

.zoom-text {
  margin: 5px 0 0 2px;
  color: #666;
}

.info-text {
  padding-top: 6px;
  color: #333;
}

/* rulers */
.hruler {
  height: 17px;
  display: flex;
  border-top: 1px solid #333;
  border-bottom: 1px solid #333;
  font-size: 9.5px;
  line-height: 14px;
  color: var(--ruler-text);
  background-image: linear-gradient(to right, #333 1px, transparent 1px);
  background-size: 20px 3px;
  background-position: 5px bottom;
  background-repeat: repeat-x;
  overflow: hidden;
}

.hr-start {
  flex: none;
  width: 85px;
}

.hr-cell {
  flex: none;
  width: 100px;
  padding-left: 6px;
  border-left: 1px solid var(--green-tick);
}

.hr-cell.zero {
  padding-left: 13px;
}

.hr-cell.last {
  width: 18px;
  overflow: hidden;
  white-space: nowrap;
}

.hr-corner {
  position: relative;
  flex: 1;
  background: #e4e4e0;
}

.work {
  flex: 1;
  min-height: 0;
  display: flex;
}

.vruler {
  flex: none;
  width: 17px;
  height: 100%;
  border-right: 1px solid #222;
  font-size: 10px;
  color: var(--ruler-text);
  overflow: hidden;
  background-image: linear-gradient(#333 1px, transparent 1px);
  background-size: 4px 20px;
  background-position: right 15px;
  background-repeat: repeat-y;
}

.vr-start {
  height: 15px;
}

.vr-cell {
  height: 100px;
  border-top: 1px solid var(--green-tick);
  padding: 3px 0 0 2px;
}

.vr-cell span {
  display: block;
  width: 7px;
  line-height: 8px;
  word-break: break-all;
}

.canvas-wrap {
  position: relative;
  flex: 1;
  min-width: 0;
  background: #fff;
  overflow: hidden;
}

.canvas {
  display: block;
}

.cyan-label {
  font-size: 10px;
  fill: #35d6e0;
}

.width-label {
  font-size: 9px;
  fill: #333;
}

/* tool palette */
.toolbox {
  position: absolute;
  left: 0;
  top: 0;
  width: 52px;
  height: 354px;
  padding: 1px 0 0 1px;
  background: var(--panel);
  display: grid;
  grid-template-columns: 26px 25px;
  grid-template-rows: repeat(10, 26px) repeat(4, 22px);
  align-content: start;
}

.tool {
  position: relative;
  display: flex;
  align-items: center;
  justify-content: center;
  border-right: 1px solid #e2e1df;
  border-bottom: 1px solid #e2e1df;
}

.tool.selected {
  background: #7c7c7c;
  border: 1px solid #555;
  border-radius: 2px;
}

.tool.shape::after {
  content: "";
  position: absolute;
  right: 1px;
  bottom: 1px;
  border-left: 5px solid transparent;
  border-bottom: 5px solid #888;
}

.mouse-row {
  grid-column: 1 / 3;
  display: flex;
  align-items: center;
  justify-content: space-between;
  font-size: 10.5px;
  color: #4a4f6a;
}

.mouse-row.first {
  box-shadow: inset 36px 1px 0 -35px #888;
}

.mouse-row span {
  margin-top: -8px;
}

.mouse-row svg {
  margin-right: -1px;
}

.layers {
  position: absolute;
  left: 0;
  top: 356px;
  width: 105px;
  height: 124px;
  background: var(--panel);
  font-size: 10px;
  color: #555;
}

.layer-row {
  height: 28px;
  display: grid;
  grid-template-columns: 14px 28px 14px 1fr;
  margin-left: 7px;
  align-items: center;
}

.check {
  width: 14px;
  height: 14px;
  display: flex;
  align-items: center;
  justify-content: center;
  background: #24508f;
  border: 1px solid #16305a;
}

.layer-c,
.layer-k {
  padding-top: 3px;
  text-align: center;
}

.layer-name {
  height: 28px;
  margin-left: 11px;
  padding-left: 2px;
  line-height: 31px;
}

.layer-name.active {
  background: #222;
  color: #ddd;
}

.layer-btns {
  display: flex;
  gap: 2px;
  margin: 3px 0 0 8px;
}

.layer-btn {
  width: 28px;
  height: 28px;
  padding: 0;
  font-family: "Noto Sans", Arial, sans-serif;
  font-size: 22px;
  line-height: 24px;
  color: #222;
  background: linear-gradient(#f6f5f4, #e9e8e6);
  border: 1px solid #aaa;
  border-radius: 5px;
}

/* scrollbars */
.vscroll {
  position: relative;
  flex: none;
  width: 9px;
  background: #e4e4e0;
  padding-top: 589px;
  padding-left: 3px;
}

.vscroll::after {
  content: "";
  position: absolute;
  right: 0;
  bottom: 3px;
  border-left: 7px solid transparent;
  border-bottom: 7px solid #b0b0ac;
}

.vthumb {
  width: 6px;
  height: 27px;
  background: #9c9c94;
  border-radius: 4px 0 0 4px;
}

.hscroll {
  position: relative;
  height: 9px;
  background: #e4e4e0;
  padding: 3px 0 0 372px;
}

.hscroll::after {
  content: "";
  position: absolute;
  right: 11px;
  bottom: 0;
  border-right: 8px solid transparent;
  border-bottom: 8px solid #b0b0ac;
}

.hthumb {
  width: 88px;
  height: 6px;
  background: #9c9c94;
  border-radius: 4px 4px 0 0;
}

/* taskbar */
.taskbar {
  height: 50px;
  display: flex;
  align-items: stretch;
  background: linear-gradient(to right, #23353f 0%, #22333f 60%, #1f2c46 100%);
  color: #fff;
  font-family: "Open Sans", Arial, sans-serif;
}

.start {
  width: 60px;
  display: flex;
  align-items: center;
  justify-content: center;
}

.search {
  position: relative;
  width: 430px;
  display: flex;
  align-items: center;
  padding-left: 16px;
  background: #f0f0f0;
  border-top: 1px solid #bbb;
  color: #2a2a38;
  font-size: 18px;
  overflow: hidden;
}

.search-text {
  margin-left: 14px;
}

.search-art {
  position: absolute;
  right: 0;
  top: -1px;
}

.task-view {
  width: 65px;
  display: flex;
  align-items: center;
  justify-content: center;
}

.tasks {
  display: flex;
}

.task {
  position: relative;
  width: 58.500px;
  display: flex;
  align-items: center;
  justify-content: center;
}

.task.running::after {
  content: "";
  position: absolute;
  left: 5px;
  right: 5px;
  bottom: 0;
  height: 3px;
  background: #6aa8dc;
}

.task.selected {
  background: #4e5d69;
}

.tray {
  flex: 1;
  min-width: 0;
  display: flex;
  align-items: center;
  padding-left: 7px;
}

.battery-meter {
  position: relative;
  width: 60px;
  height: 25px;
  border: 2px solid #fff;
  background: #050505;
  display: flex;
  align-items: center;
  justify-content: center;
  margin-top: -1px;
}

.battery-meter::after {
  content: "";
  position: absolute;
  right: -5px;
  top: 5px;
  width: 3px;
  height: 11px;
  background: #fff;
}

.battery-fill {
  position: absolute;
  left: 1px;
  top: 1px;
  bottom: 1px;
  width: 60%;
  background: #12973e;
}

.battery-text {
  position: relative;
  font-size: 18px;
}

.tray-leaf { margin-left: 12px; }
.tray-cloud { margin-left: 25px; }

.temp {
  margin-left: 11px;
  font-size: 17.500px;
}

.tray-chevron { margin-left: 29px; }
.tray-plug { margin-left: 13px; }
.tray-meet { margin-left: 12px; }
.tray-screen { margin-left: 11px; }
.tray-wifi { margin-left: 13px; }
.tray-sound { margin-left: 9px; }

.clock {
  margin-left: 8px;
  width: 78px;
  text-align: center;
  white-space: nowrap;
  font-size: 13.500px;
  line-height: 24px;
}

.notify {
  position: relative;
  margin-left: 20px;
  margin-top: -8px;
  height: 18px;
}

.notify-badge {
  position: absolute;
  left: 9px;
  top: 9px;
  width: 21px;
  height: 21px;
  border-radius: 50%;
  background: #3a3f46;
  border: 2px solid #8b9097;
  font-size: 13px;
  font-weight: 700;
  line-height: 17px;
  text-align: center;
}
```
